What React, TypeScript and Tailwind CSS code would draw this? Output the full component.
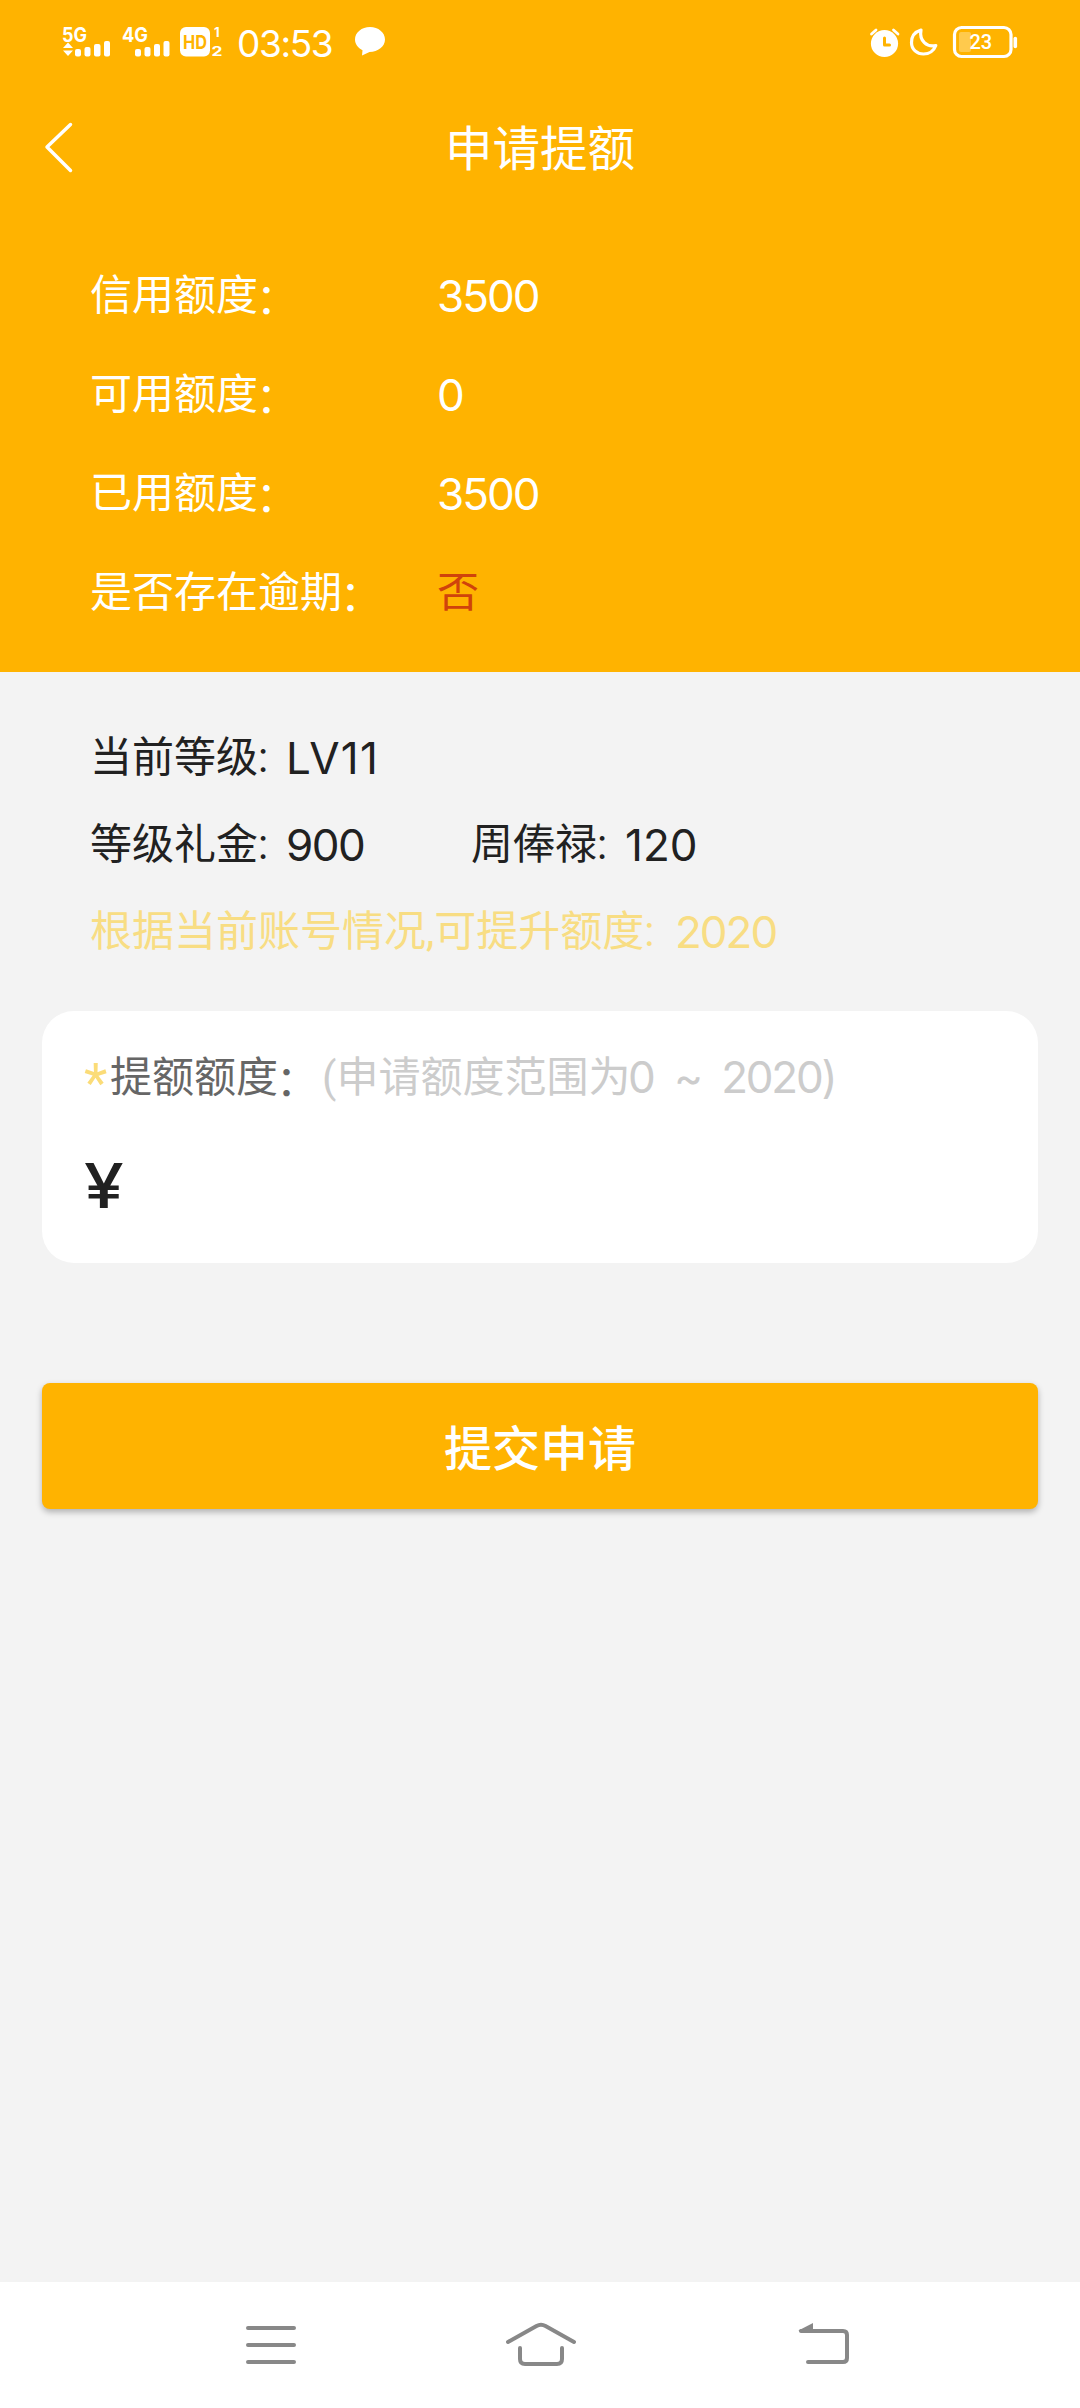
import React from 'react';

const Digits: React.FC<{ children: React.ReactNode; className?: string }> = ({ children, className = 'tracking-[-2px]' }) => (
  <span className={`font-['Inter',sans-serif] text-[44px] ${className}`}>{children}</span>
);

const Colon: React.FC = () => <span className="-ml-0.5 align-[-4px] leading-none">：</span>;

const CreditRow: React.FC<{ label: string; children: React.ReactNode }> = ({ label, children }) => (
  <div className="flex h-[99px] items-center pl-[90px] text-[42px] text-white">
    <span className="w-[347px] whitespace-nowrap">{label}<Colon /></span>
    {children}
  </div>
);

const StatusBar: React.FC = () => (
  <div className="flex h-20 items-start justify-between text-white">
    <div className="flex">
      <svg className="ml-[60px] h-20 w-[170px]" viewBox="60 0 170 80" fill="currentColor">
        <g fontFamily="Inter, sans-serif" fontWeight="700">
          <text x="62" y="42" fontSize="20" textLength="25" lengthAdjust="spacingAndGlyphs">5G</text>
          <text x="122" y="42" fontSize="20" textLength="26" lengthAdjust="spacingAndGlyphs">4G</text>
          <text x="214" y="37" fontSize="13">1</text>
          <text x="211.500" y="56" fontSize="13" textLength="11" lengthAdjust="spacingAndGlyphs">2</text>
        </g>
        <path d="M63 48l5-5.500 5 5.500zM63 50.500h10l-5 5.500z" />
        <rect x="75" y="49" width="6" height="7.500" rx="2" />
        <rect x="84.500" y="47" width="6" height="9.500" rx="2" />
        <rect x="94" y="44" width="6.500" height="12.500" rx="2" />
        <rect x="104" y="41" width="6" height="15.500" rx="2" />
        <rect x="135" y="49" width="6" height="7.500" rx="2" />
        <rect x="144.500" y="47" width="6" height="9.500" rx="2" />
        <rect x="154" y="44" width="6" height="12.500" rx="2" />
        <rect x="163.500" y="41" width="6" height="15.500" rx="2" />
        <rect x="180" y="27" width="30" height="29.500" rx="6" />
        <text x="183" y="48.500" fontSize="19" fill="#ffb300" fontFamily="Inter, sans-serif" fontWeight="700" textLength="24" lengthAdjust="spacingAndGlyphs">HD</text>
      </svg>
      <span className="ml-[7px] mt-[22px] w-[98px] font-['Inter',sans-serif] text-[37px] leading-[44px] tracking-[-1.4px]">03:53</span>
      <svg className="ml-[19px] mt-[26px] h-8 w-8" viewBox="0 0 32 32" fill="currentColor">
        <path d="M16 1C7.700 1 1 6.500 1 13.500c0 4.500 3 8.500 7.500 10.700L8 29.500l7.500-3.600c8.500 0 15.500-5.400 15.500-12.400S24.300 1 16 1z" />
      </svg>
    </div>
    <svg className="mr-[61px] h-20 w-[150px]" viewBox="870 0 150 80" fill="none" stroke="currentColor" strokeLinecap="round" strokeLinejoin="round">
      <circle cx="885.500" cy="43.500" r="13.600" fill="currentColor" stroke="none" />
      <path d="M872.500 34l4.500-4M899 34l-4.500-4" strokeWidth="2.800" />
      <path d="M885.500 38v7h5" stroke="#ffb300" strokeWidth="3" />
      <path d="M922 30C915.500 32 912.500 37 912.500 42.500c0 7 5.500 11.500 12 11.500 5.600 0 10.500-3.400 12.300-8.500C928 47.500 920 41 922 30z" strokeWidth="3.200" />
      <rect x="955.500" y="27.500" width="56.500" height="29" rx="7" strokeWidth="3.200" />
      <rect x="960" y="32" width="12" height="20" rx="2" fill="#fff" fillOpacity="0.300" stroke="none" />
      <path d="M1016.300 38.500v8" strokeWidth="3.600" />
      <text x="970.500" y="49" fontSize="20" fill="currentColor" stroke="none" fontFamily="Roboto, sans-serif" fontWeight="500">23</text>
    </svg>
  </div>
);

const NavBar: React.FC = () => (
  <div className="flex h-[126px] items-center bg-white text-[#888]">
    <svg className="ml-[244px] h-[60px] w-[54px]" viewBox="244 2315 54 60" fill="none" stroke="currentColor" strokeWidth="4" strokeLinecap="round">
      <path d="M248 2328h46M248 2345h46M248 2362h46" />
    </svg>
    <svg className="ml-[205px] h-[60px] w-[76px]" viewBox="503 2315 76 60" fill="none" stroke="currentColor" strokeWidth="4" strokeLinecap="round">
      <path d="M508 2342l28.500-16q4.500-2.500 9 0L574 2342" />
      <path d="M520 2348v11q0 5 5 5h32q5 0 5-5v-11" />
    </svg>
    <svg className="ml-[217px] h-[60px] w-[55px]" viewBox="796 2315 55 60" fill="none" stroke="currentColor" strokeWidth="4" strokeLinecap="round">
      <path d="M801 2331h42q4 0 4 4v23q0 4-4 4h-35" />
      <path d="M798.500 2330.500l14.500-7.500v9h-13z" fill="currentColor" stroke="none" />
    </svg>
  </div>
);

const App: React.FC = () => {
  return (
    <div className="flex h-[2408px] w-[1080px] flex-col bg-[#f3f3f3] font-['Roboto','Noto_Sans_CJK_SC',sans-serif] text-[42px] text-[#212121]">
      <header className="h-[672px] bg-[#ffb300]">
        <StatusBar />
        <div className="flex h-[136px] items-center pl-[43px] text-white">
          <svg className="h-[54px] w-8" viewBox="0 0 32 54" fill="none" stroke="currentColor" strokeWidth="3.500" strokeLinecap="round" strokeLinejoin="round">
            <path d="M27.500 3.500L4 26L27.500 49.500" />
          </svg>
          <h1 className="ml-[370px] pt-1.5 text-[47.500px]">申请提额</h1>
        </div>
        <div className="mt-[30px]">
          <CreditRow label="信用额度">
            <Digits>3500</Digits>
          </CreditRow>
          <CreditRow label="可用额度">
            <Digits>0</Digits>
          </CreditRow>
          <CreditRow label="已用额度">
            <Digits>3500</Digits>
          </CreditRow>
          <CreditRow label="是否存在逾期">
            <span className="text-[#d0430b]">否</span>
          </CreditRow>
        </div>
      </header>

      <main className="flex-1 px-[42px]">
        <div className="pl-12 pt-[42px]">
          <div className="flex h-[87px] items-center whitespace-nowrap">
            <span className="w-[196px]">当前等级:</span>
            <Digits className="tracking-[1.3px]">LV11</Digits>
          </div>
          <div className="flex h-[87px] items-center whitespace-nowrap">
            <span className="w-[196px]">等级礼金:</span>
            <span className="w-[185px]"><Digits className="tracking-[-1.5px]">900</Digits></span>
            <span className="w-[154px]">周俸禄:</span>
            <Digits className="tracking-[0px]">120</Digits>
          </div>
          <div className="flex h-[87px] items-center whitespace-nowrap text-[#f8dd83]">
            <span className="w-[585px]">根据当前账号情况,可提升额度:</span>
            <Digits>2020</Digits>
          </div>
        </div>

        <section className="mt-9 h-[252px] rounded-[32px] bg-white pl-[42px] pt-[34px]">
          <div className="flex h-16 items-center whitespace-nowrap">
            <span className="w-[26px] pt-2.5 text-[54px] text-[#fbdc78]">*</span>
            <span className="w-[212px] text-[#666]">提额额度<Colon /></span>
            <span className="w-[306px] text-[#ccc]">(申请额度范围为</span>
            <span className="text-[#ccc]"><Digits className="tracking-[-2.2px]">0&nbsp; ~ &nbsp;2020)</Digits></span>
          </div>
          <div className="mt-[41px] w-fit origin-left scale-x-115 font-['Inter',sans-serif] text-[62px] font-medium leading-[72px]">¥</div>
        </section>

        <button className="mt-[120px] flex h-[126px] w-full items-center justify-center rounded-lg bg-[#ffb300] pt-2 text-[48px] font-medium text-white shadow-[0_3px_6px_rgba(0,0,0,0.28)]">
          提交申请
        </button>
      </main>

      <NavBar />
    </div>
  );
};

export default App;
